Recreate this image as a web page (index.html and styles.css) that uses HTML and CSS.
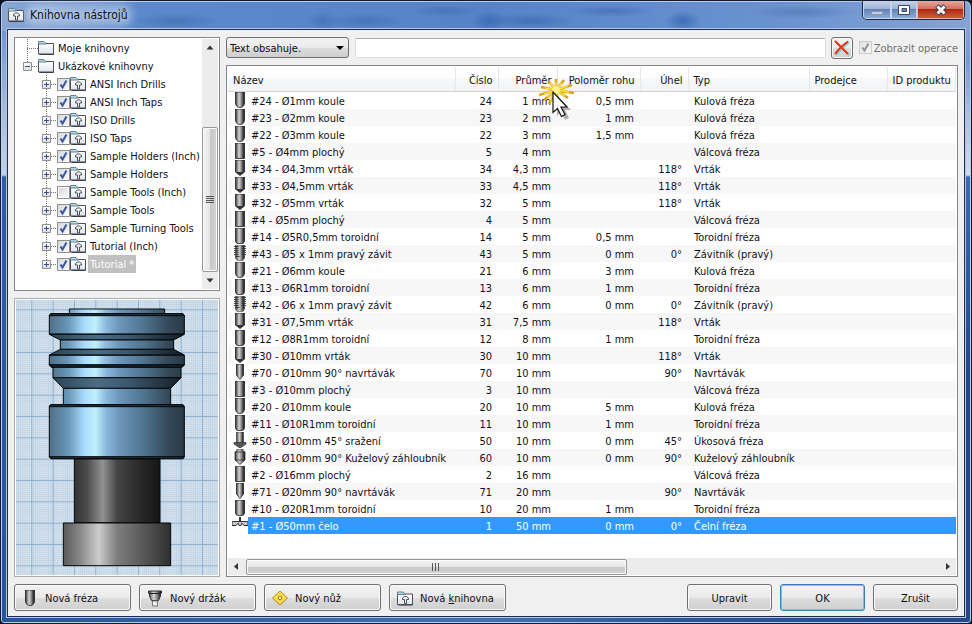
FILE: index.html
```html
<!DOCTYPE html>
<html lang="cs">
<head>
    <meta charset="UTF-8">
    <meta name="viewport" content="width=device-width, initial-scale=1.0">
    <title>Knihovna nástrojů</title>
    <link rel="stylesheet" href="styles.css">
</head>
<body>
    <!-- icon sprites -->
    <svg class="sprites" aria-hidden="true">
        <defs>
            <linearGradient id="steel" x1="0" x2="1" y1="0" y2="0">
                <stop offset="0" stop-color="#2a2a2a"/>
                <stop offset=".2" stop-color="#8a8a8a"/>
                <stop offset=".4" stop-color="#d4d4d4"/>
                <stop offset=".65" stop-color="#8c8c8c"/>
                <stop offset=".85" stop-color="#3c3c3c"/>
                <stop offset="1" stop-color="#161616"/>
            </linearGradient>
            <linearGradient id="paper" x1="0" x2="0" y1="0" y2="1">
                <stop offset="0" stop-color="#ffffff"/>
                <stop offset="1" stop-color="#dfe3ea"/>
            </linearGradient>
            <linearGradient id="box" x1="0" x2="0" y1="0" y2="1">
                <stop offset="0" stop-color="#ffffff"/>
                <stop offset="1" stop-color="#dcdcdc"/>
            </linearGradient>
        </defs>
        <symbol id="ball" viewBox="0 0 16 17"><path d="M3.500 0V11Q4 15.500 8 15.500T12.500 11V0Z" fill="url(#steel)" stroke="#222" stroke-width=".8"/></symbol>
        <symbol id="flat" viewBox="0 0 16 17"><path d="M3.500 0V15.500H12.500V0Z" fill="url(#steel)" stroke="#222" stroke-width=".8"/></symbol>
        <symbol id="torus" viewBox="0 0 16 17"><path d="M3.500 0V13Q4 15.500 6 15.500H10Q12 15.500 12.500 13V0Z" fill="url(#steel)" stroke="#222" stroke-width=".8"/></symbol>
        <symbol id="drill" viewBox="0 0 16 17"><path d="M3.500 0V12L8 15.500L12.500 12V0Z" fill="url(#steel)" stroke="#222" stroke-width=".8"/><path d="M3.500 12H12.500L8 15.500Z" fill="#333"/></symbol>
        <symbol id="spot" viewBox="0 0 16 17"><path d="M4.500 0V11L8 15.500L11.500 11V0Z" fill="url(#steel)" stroke="#222" stroke-width=".8"/></symbol>
        <symbol id="tap" viewBox="0 0 16 17"><path d="M3.500 0V13L5 15.500H11L12.500 13V0Z" fill="url(#steel)" stroke="#555" stroke-width=".6"/><path d="M2 1.500H14M2 3.500H14M2 5.500H14M2 7.500H14M2 9.500H14M3 11.500H13" stroke="#333" stroke-width=".9" stroke-dasharray="4.500 3 4.500"/></symbol>
        <symbol id="chamfer" viewBox="0 0 16 17"><path d="M4.500 0H11.500V10.500H4.500Z" fill="url(#steel)" stroke="#333" stroke-width=".6"/><path d="M2 10.500H14V12L9 15.500H7L2 12Z" fill="#555" stroke="#222" stroke-width=".6"/></symbol>
        <symbol id="sink" viewBox="0 0 16 17"><path d="M5 0H11V2L13 3V11L8 15.500L3 11V3L5 2Z" fill="url(#steel)" stroke="#333" stroke-width=".8"/><path d="M3 3H13M3 11H13" stroke="#333" stroke-width=".8"/></symbol>
        <symbol id="face" viewBox="0 0 16 17"><path d="M7 0H9V5H7Z" fill="#333"/><path d="M0 4.500H16M0 5V8.500H4L5.500 6.500H6.500L7 8.500H9L9.500 6.500H10.500L12 8.500H16V5" fill="#c8c8c8" stroke="#333"/></symbol>
        <symbol id="folder" viewBox="0 0 16 16"><path d="M1.500 5.500H15.500V14.500H1.500Z" fill="none" stroke="#2c2f38"/><path d="M.5 3.500H15.500V14H.5Z" fill="url(#paper)" stroke="#4b4f59"/><path d="M.5 1.500H6L8.500 4H.5Z" fill="#b4dcea" stroke="#64808c"/></symbol>
        <symbol id="lib" viewBox="0 0 16 16"><use href="#folder"/><path d="M5.500 9V7.500L7.500 6H9.500L11.500 7.500V9H9.500V13H7.500V9Z" fill="#f4f4f4" stroke="#4b4f59"/></symbol>
        <symbol id="leaf" viewBox="0 0 20 18"><path d="M9.500 0V18M9 9.500H20" stroke="#777" stroke-dasharray="1 1"/></symbol>
        <symbol id="minus" viewBox="0 0 20 18"><path d="M9.500 0V6M14 9.500H20" stroke="#777" stroke-dasharray="1 1"/><path d="M5.500 5.500H13.500V13.500H5.500Z" fill="url(#box)" stroke="#8f8f8f"/><path d="M7 9.500H12" stroke="#2f4f9f"/></symbol>
        <symbol id="plus" viewBox="0 0 20 18"><path d="M9.500 0V18M14 9.500H20" stroke="#777" stroke-dasharray="1 1"/><path d="M5.500 5.500H13.500V13.500H5.500Z" fill="url(#box)" stroke="#8f8f8f"/><path d="M7 9.500H12M9.500 7V12" stroke="#2f4f9f"/></symbol>
        <symbol id="last" viewBox="0 0 20 18"><path d="M9.500 0V6M14 9.500H20" stroke="#777" stroke-dasharray="1 1"/><path d="M5.500 5.500H13.500V13.500H5.500Z" fill="url(#box)" stroke="#8f8f8f"/><path d="M7 9.500H12M9.500 7V12" stroke="#2f4f9f"/></symbol>
    </svg>

    <div class="window">
        <header class="titlebar">
            <svg class="icon"><use href="#lib"/></svg>
            <h1><span>Knihovna nástrojů</span></h1>
            <div class="controls">
                <button class="min" aria-label="Minimalizovat"><svg viewBox="0 0 14 12"><path d="M1.500 7.500H12.500V10.500H1.500Z" fill="#c3d0e3" stroke="#8597b5"/></svg></button>
                <button class="max" aria-label="Maximalizovat"><svg viewBox="0 0 14 12"><path d="M1.500 1.500H12.500V10.500H1.500Z" fill="#fff" stroke="#3b4660"/><path d="M5 4.500H9.500V7.500H5Z" fill="#6f86b0" stroke="#3b4660"/></svg></button>
                <button class="close" aria-label="Zavřít"><svg viewBox="0 0 14 12"><path d="M3 2L11 10M11 2L3 10" stroke="#3d3f55" stroke-width="5"/><path d="M3.500 2.500L10.500 9.500M10.500 2.500L3.500 9.500" stroke="#f4f4f4" stroke-width="3"/></svg></button>
            </div>
        </header>

        <main class="client">
            <div class="panes">
                <aside class="sidebar">
                    <div class="tree">
                        <ul>
                            <li><svg class="branch"><use href="#leaf"/></svg><svg class="icon"><use href="#folder"/></svg><span>Moje knihovny</span></li>
                            <li><svg class="branch"><use href="#minus"/></svg><svg class="icon"><use href="#folder"/></svg><span>Ukázkové knihovny</span></li>
                            <li class="sub"><svg class="branch"><use href="#plus"/></svg><input type="checkbox" id="l1" checked><svg class="icon"><use href="#lib"/></svg><label for="l1">ANSI Inch Drills</label></li>
                            <li class="sub"><svg class="branch"><use href="#plus"/></svg><input type="checkbox" id="l2" checked><svg class="icon"><use href="#lib"/></svg><label for="l2">ANSI Inch Taps</label></li>
                            <li class="sub"><svg class="branch"><use href="#plus"/></svg><input type="checkbox" id="l3" checked><svg class="icon"><use href="#lib"/></svg><label for="l3">ISO Drills</label></li>
                            <li class="sub"><svg class="branch"><use href="#plus"/></svg><input type="checkbox" id="l4" checked><svg class="icon"><use href="#lib"/></svg><label for="l4">ISO Taps</label></li>
                            <li class="sub"><svg class="branch"><use href="#plus"/></svg><input type="checkbox" id="l5" checked><svg class="icon"><use href="#lib"/></svg><label for="l5">Sample Holders (Inch)</label></li>
                            <li class="sub"><svg class="branch"><use href="#plus"/></svg><input type="checkbox" id="l6" checked><svg class="icon"><use href="#lib"/></svg><label for="l6">Sample Holders</label></li>
                            <li class="sub"><svg class="branch"><use href="#plus"/></svg><input type="checkbox" id="l7"><svg class="icon"><use href="#lib"/></svg><label for="l7">Sample Tools (Inch)</label></li>
                            <li class="sub"><svg class="branch"><use href="#plus"/></svg><input type="checkbox" id="l8" checked><svg class="icon"><use href="#lib"/></svg><label for="l8">Sample Tools</label></li>
                            <li class="sub"><svg class="branch"><use href="#plus"/></svg><input type="checkbox" id="l9" checked><svg class="icon"><use href="#lib"/></svg><label for="l9">Sample Turning Tools</label></li>
                            <li class="sub"><svg class="branch"><use href="#plus"/></svg><input type="checkbox" id="l10" checked><svg class="icon"><use href="#lib"/></svg><label for="l10">Tutorial (Inch)</label></li>
                            <li class="sub"><svg class="branch"><use href="#last"/></svg><input type="checkbox" id="l11" checked><svg class="icon"><use href="#lib"/></svg><label class="current" for="l11">Tutorial *</label></li>
                        </ul>
                        <div class="scroll vertical">
                            <svg class="arrow" viewBox="0 0 16 16"><path d="M4.500 10H11.500L8 6Z"/></svg>
                            <div class="track">
                                <div class="thumb"><svg viewBox="0 0 8 8"><path d="M0 .5H8M0 2.500H8M0 4.500H8M0 6.500H8"/></svg></div>
                            </div>
                            <svg class="arrow" viewBox="0 0 16 16"><path d="M4.500 6H11.500L8 10Z"/></svg>
                        </div>
                    </div>

                    <div class="preview">
                        <svg viewBox="0 0 606 825" preserveAspectRatio="xMidYMid slice">
                            <defs>
                                <pattern id="fine" width="6.400" height="6.400" patternUnits="userSpaceOnUse">
                                    <path d="M0 1.500H6.400M1.500 0V6.400" stroke="#bfd2e4" stroke-width="2.400"/>
                                </pattern>
                                <pattern id="grid" x="46" y="28" width="64" height="64" patternUnits="userSpaceOnUse">
                                    <path d="M0 1.500H64M1.500 0V64" stroke="#8fb1d2" stroke-width="3"/>
                                </pattern>
                                <linearGradient id="blue" gradientUnits="userSpaceOnUse" x1="100" x2="505" y1="0" y2="0">
                                    <stop offset="0" stop-color="#4f7088"/>
                                    <stop offset=".14" stop-color="#6997ba"/>
                                    <stop offset=".26" stop-color="#aadbfd"/>
                                    <stop offset=".34" stop-color="#bff0fb"/>
                                    <stop offset=".42" stop-color="#8cbadd"/>
                                    <stop offset=".52" stop-color="#6b95bb"/>
                                    <stop offset=".7" stop-color="#507490"/>
                                    <stop offset=".87" stop-color="#364a5b"/>
                                    <stop offset="1" stop-color="#293a47"/>
                                </linearGradient>
                                <linearGradient id="shade" gradientUnits="userSpaceOnUse" x1="100" x2="505" y1="0" y2="0">
                                    <stop offset="0" stop-color="#2c4250"/>
                                    <stop offset=".35" stop-color="#4b6c84"/>
                                    <stop offset=".6" stop-color="#3c566b"/>
                                    <stop offset="1" stop-color="#111a22"/>
                                </linearGradient>
                                <linearGradient id="dark">
                                    <stop offset="0" stop-color="#333333"/>
                                    <stop offset=".15" stop-color="#4c4c4c"/>
                                    <stop offset=".33" stop-color="#929292"/>
                                    <stop offset=".5" stop-color="#444444"/>
                                    <stop offset=".8" stop-color="#262626"/>
                                    <stop offset="1" stop-color="#151515"/>
                                </linearGradient>
                                <linearGradient id="gray">
                                    <stop offset="0" stop-color="#5a5a5a"/>
                                    <stop offset=".15" stop-color="#868686"/>
                                    <stop offset=".33" stop-color="#cccccc"/>
                                    <stop offset=".5" stop-color="#7e7e7e"/>
                                    <stop offset=".8" stop-color="#4f4f4f"/>
                                    <stop offset="1" stop-color="#2f2f2f"/>
                                </linearGradient>
                            </defs>
                            <rect width="606" height="825" fill="#dde8f0"/>
                            <rect width="606" height="825" fill="url(#fine)"/>
                            <rect width="606" height="825" fill="url(#grid)"/>
                            <g stroke="#05080b" stroke-width="3">
                                <path d="M160 27H446V41H160Z" fill="url(#blue)"/>
                                <path d="M104 41H501L505 47V102H100V47Z" fill="url(#blue)"/>
                                <path d="M104 41H501L505 47H100Z" fill="#22323d"/>
                                <path d="M100 103H505L473 120H133Z" fill="url(#shade)"/>
                                <path d="M133 120H473V148H133Z" fill="url(#blue)"/>
                                <path d="M133 148H473L505 165H100Z" fill="url(#shade)"/>
                                <path d="M100 166H505V195L498 202H107L100 195Z" fill="url(#blue)"/>
                                <path d="M100 194H505L498 202H107Z" fill="#17222b"/>
                                <path d="M111 202H495V233H111Z" fill="url(#blue)"/>
                                <path d="M111 233H495L464 265H142Z" fill="url(#shade)"/>
                                <path d="M142 265H464V314H142Z" fill="url(#blue)"/>
                                <path d="M104 314H501L505 320V470L501 476H104L100 470V320Z" fill="url(#blue)"/>
                                <path d="M104 314H501L505 320H100Z" fill="#22323d"/>
                                <path d="M100 470H505L501 476H104Z" fill="#22323d"/>
                                <path d="M175 477H432V668H175Z" fill="url(#dark)"/>
                                <path d="M142 669H464V797H142Z" fill="url(#gray)"/>
                            </g>
                        </svg>
                    </div>
                </aside>

                <section class="content">
                    <form class="filter">
                        <select aria-label="Filtr">
                            <option>Text obsahuje.</option>
                        </select>
                        <input type="text" aria-label="Hledaný text">
                        <button type="button" class="clear" aria-label="Vymazat"><svg viewBox="0 0 16 16"><path d="M2 2L15 15M15 2L2 15" stroke="#7fd6dc" stroke-width="2"/><path d="M1 1Q7 7 14 14M14 1.500Q6 7 1 14" fill="none" stroke="#e8350f" stroke-width="2"/></svg></button>
                        <input type="checkbox" id="ops" checked disabled>
                        <label for="ops">Zobrazit operace</label>
                    </form>

                    <div class="list">
                        <table>
                            <colgroup>
                                <col class="c-name"><col class="c-no"><col class="c-dia"><col class="c-rad"><col class="c-ang"><col class="c-type"><col class="c-vendor"><col>
                            </colgroup>
                            <thead>
                                <tr><th>Název</th><th class="n">Číslo</th><th class="n">Průměr</th><th class="n">Poloměr rohu</th><th class="n">Úhel</th><th>Typ</th><th>Prodejce</th><th>ID produktu</th></tr>
                            </thead>
                            <tbody>
                                <tr><td><svg><use href="#ball"/></svg>#24 - Ø1mm koule</td><td>24</td><td>1 mm</td><td>0,5 mm</td><td></td><td>Kulová fréza</td><td></td><td></td></tr>
                                <tr><td><svg><use href="#ball"/></svg>#23 - Ø2mm koule</td><td>23</td><td>2 mm</td><td>1 mm</td><td></td><td>Kulová fréza</td><td></td><td></td></tr>
                                <tr><td><svg><use href="#ball"/></svg>#22 - Ø3mm koule</td><td>22</td><td>3 mm</td><td>1,5 mm</td><td></td><td>Kulová fréza</td><td></td><td></td></tr>
                                <tr><td><svg><use href="#flat"/></svg>#5 - Ø4mm plochý</td><td>5</td><td>4 mm</td><td></td><td></td><td>Válcová fréza</td><td></td><td></td></tr>
                                <tr><td><svg><use href="#drill"/></svg>#34 - Ø4,3mm vrták</td><td>34</td><td>4,3 mm</td><td></td><td>118°</td><td>Vrták</td><td></td><td></td></tr>
                                <tr><td><svg><use href="#drill"/></svg>#33 - Ø4,5mm vrták</td><td>33</td><td>4,5 mm</td><td></td><td>118°</td><td>Vrták</td><td></td><td></td></tr>
                                <tr><td><svg><use href="#drill"/></svg>#32 - Ø5mm vrták</td><td>32</td><td>5 mm</td><td></td><td>118°</td><td>Vrták</td><td></td><td></td></tr>
                                <tr><td><svg><use href="#flat"/></svg>#4 - Ø5mm plochý</td><td>4</td><td>5 mm</td><td></td><td></td><td>Válcová fréza</td><td></td><td></td></tr>
                                <tr><td><svg><use href="#torus"/></svg>#14 - Ø5R0,5mm toroidní</td><td>14</td><td>5 mm</td><td>0,5 mm</td><td></td><td>Toroidní fréza</td><td></td><td></td></tr>
                                <tr><td><svg><use href="#tap"/></svg>#43 - Ø5 x 1mm pravý závit</td><td>43</td><td>5 mm</td><td>0 mm</td><td>0°</td><td>Závitník (pravý)</td><td></td><td></td></tr>
                                <tr><td><svg><use href="#ball"/></svg>#21 - Ø6mm koule</td><td>21</td><td>6 mm</td><td>3 mm</td><td></td><td>Kulová fréza</td><td></td><td></td></tr>
                                <tr><td><svg><use href="#torus"/></svg>#13 - Ø6R1mm toroidní</td><td>13</td><td>6 mm</td><td>1 mm</td><td></td><td>Toroidní fréza</td><td></td><td></td></tr>
                                <tr><td><svg><use href="#tap"/></svg>#42 - Ø6 x 1mm pravý závit</td><td>42</td><td>6 mm</td><td>0 mm</td><td>0°</td><td>Závitník (pravý)</td><td></td><td></td></tr>
                                <tr><td><svg><use href="#drill"/></svg>#31 - Ø7,5mm vrták</td><td>31</td><td>7,5 mm</td><td></td><td>118°</td><td>Vrták</td><td></td><td></td></tr>
                                <tr><td><svg><use href="#torus"/></svg>#12 - Ø8R1mm toroidní</td><td>12</td><td>8 mm</td><td>1 mm</td><td></td><td>Toroidní fréza</td><td></td><td></td></tr>
                                <tr><td><svg><use href="#drill"/></svg>#30 - Ø10mm vrták</td><td>30</td><td>10 mm</td><td></td><td>118°</td><td>Vrták</td><td></td><td></td></tr>
                                <tr><td><svg><use href="#spot"/></svg>#70 - Ø10mm 90° navrtávák</td><td>70</td><td>10 mm</td><td></td><td>90°</td><td>Navrtávák</td><td></td><td></td></tr>
                                <tr><td><svg><use href="#flat"/></svg>#3 - Ø10mm plochý</td><td>3</td><td>10 mm</td><td></td><td></td><td>Válcová fréza</td><td></td><td></td></tr>
                                <tr><td><svg><use href="#ball"/></svg>#20 - Ø10mm koule</td><td>20</td><td>10 mm</td><td>5 mm</td><td></td><td>Kulová fréza</td><td></td><td></td></tr>
                                <tr><td><svg><use href="#torus"/></svg>#11 - Ø10R1mm toroidní</td><td>11</td><td>10 mm</td><td>1 mm</td><td></td><td>Toroidní fréza</td><td></td><td></td></tr>
                                <tr><td><svg><use href="#chamfer"/></svg>#50 - Ø10mm 45° sražení</td><td>50</td><td>10 mm</td><td>0 mm</td><td>45°</td><td>Úkosová fréza</td><td></td><td></td></tr>
                                <tr><td><svg><use href="#sink"/></svg>#60 - Ø10mm 90° Kuželový záhloubník</td><td>60</td><td>10 mm</td><td>0 mm</td><td>90°</td><td>Kuželový záhloubník</td><td></td><td></td></tr>
                                <tr><td><svg><use href="#flat"/></svg>#2 - Ø16mm plochý</td><td>2</td><td>16 mm</td><td></td><td></td><td>Válcová fréza</td><td></td><td></td></tr>
                                <tr><td><svg><use href="#spot"/></svg>#71 - Ø20mm 90° navrtávák</td><td>71</td><td>20 mm</td><td></td><td>90°</td><td>Navrtávák</td><td></td><td></td></tr>
                                <tr><td><svg><use href="#torus"/></svg>#10 - Ø20R1mm toroidní</td><td>10</td><td>20 mm</td><td>1 mm</td><td></td><td>Toroidní fréza</td><td></td><td></td></tr>
                                <tr class="selected"><td><svg><use href="#face"/></svg>#1 - Ø50mm čelo</td><td>1</td><td>50 mm</td><td>0 mm</td><td>0°</td><td>Čelní fréza</td><td></td><td></td></tr>
                            </tbody>
                        </table>
                        <div class="scroll horizontal">
                            <svg class="arrow" viewBox="0 0 16 16"><path d="M10 4.500V11.500L6 8Z"/></svg>
                            <div class="track">
                                <div class="thumb"><svg viewBox="0 0 8 8"><path d="M.5 0V8M3.500 0V8M6.500 0V8"/></svg></div>
                            </div>
                            <svg class="arrow" viewBox="0 0 16 16"><path d="M6 4.500V11.500L10 8Z"/></svg>
                        </div>

                        <!-- mouse pointer with click burst -->
                        <svg class="pointer" viewBox="0 0 44 46">
                            <path d="M17 12L17 1M17 12L25 2M17 12L33 7M17 12L35 15M17 12L29 20M17 12L19 22M17 12L10 26M17 12L5 22M17 12L0 17M17 12L2 9M17 12L9 3" stroke="#dda21a" stroke-width="2.600"/>
                            <path d="M17 12L17 4M17 12L23 5M17 12L29 8M17 12L30 14M17 12L26 18M17 12L18 19M17 12L11 23M17 12L8 19M17 12L5 16M17 12L6 10M17 12L11 5" stroke="#ffe04a" stroke-width="1.400"/>
                            <circle cx="17" cy="12" r="4" fill="#fff08a"/>
                            <path d="M18 18V38L22 34L26 42L30 40L26 32H32Z" fill="#000" opacity=".3"/>
                            <path d="M14 14V34.500L18.500 30.500L22.500 38.500L26 36.500L22 29H28Z" fill="#fff" stroke="#111" stroke-width="1.200"/>
                        </svg>
                    </div>
                </section>
            </div>

            <footer class="buttons">
                <button class="tool"><svg><use href="#ball"/></svg>Nová fréza</button>
                <button class="tool"><svg viewBox="0 0 16 17"><path d="M1.500 1H14.500V3L13.500 4V6L11.500 10.500H4.500L2.500 6V4L1.500 3Z" fill="url(#steel)" stroke="#333"/><path d="M2 3.500H14" stroke="#222"/><path d="M5.500 11H10.500V16H5.500Z" fill="#eee" stroke="#777"/></svg>Nový držák</button>
                <button class="tool"><svg viewBox="0 0 16 17"><path d="M8 1L15.500 8L8 15L.5 8Z" fill="#fbdc4e" stroke="#b98716"/><circle cx="8" cy="8" r="1.800" fill="#fff8d0" stroke="#a07818"/></svg>Nový nůž</button>
                <button class="tool"><svg><use href="#lib"/></svg>Nová <u>k</u>nihovna</button>
                <span class="spacer"></span>
                <button>Upravit</button>
                <button class="default">OK</button>
                <button>Zrušit</button>
            </footer>
        </main>
    </div>
</body>
</html>
```
FILE: styles.css
```css
* {
    box-sizing: border-box;
}

body {
    margin: 0;
    background: #0c1424;
    font-family: "DejaVu Sans Condensed", "DejaVu Sans", sans-serif;
    font-size: 11px;
    line-height: 17px;
    color: #101018;
}

button, input, select {
    font: inherit;
    color: inherit;
    margin: 0;
}

.sprites {
    position: absolute;
    width: 0;
    height: 0;
}

/* window frame */
.window {
    display: flex;
    flex-direction: column;
    min-height: 100vh;
    padding: 0 6px 6px;
    border: 1px solid #101a30;
    border-radius: 7px 7px 4px 4px;
    box-shadow: inset 0 0 0 1px #b9cdea;
    background:
        radial-gradient(closest-side, #3e6cb4, #3e6cb400) 470px 10px / 36px 20px no-repeat,
        radial-gradient(closest-side, #3e6cb4, #3e6cb400) 664px 10px / 36px 20px no-repeat,
        radial-gradient(closest-side, #4a74b8, #4a74b800) 305px 10px / 34px 20px no-repeat,
        radial-gradient(closest-side, #4a74b8, #4a74b800) 130px 12px / 90px 16px no-repeat,
        radial-gradient(closest-side, #4a74b8, #4a74b800) 325px 12px / 80px 16px no-repeat,
        radial-gradient(closest-side, #4470b6, #4470b600) 485px 12px / 90px 16px no-repeat,
        radial-gradient(closest-side, #4a74b8, #4a74b800) 410px 4px / 70px 12px no-repeat,
        radial-gradient(closest-side, #4a74b8, #4a74b800) 565px 4px / 90px 12px no-repeat,
        radial-gradient(closest-side, #5a80bc, #5a80bc00) 745px 4px / 110px 14px no-repeat,
        linear-gradient(90deg, #8aa6d4, #5c88cc 14%, #5683c8 50%, #6a92d0 80%, #86a3d2) top / 100% 30px no-repeat,
        linear-gradient(#5c88cc, #86a5d6 60px, #aebfdd 120px, #c3cfe4 174px, #2f5ca4 176px, #29539a) left / 8px 100% no-repeat,
        linear-gradient(#8fa9d4, #7899d0 60px, #a9bddf 110px, #d3dbea 174px, #3c6ab6 176px, #24488a 60%, #24488a) right / 8px 100% no-repeat,
        linear-gradient(90deg, #29539a, #4570b4 50%, #2c569c 70%, #24488a) bottom / 100% 8px no-repeat;
}

.titlebar {
    display: flex;
    align-items: center;
    gap: 6px;
    height: 28px;
    padding-left: 1px;
}

.titlebar h1 {
    flex: 1;
    margin: 0;
    font-size: 12px;
    font-weight: normal;
}

.titlebar h1 span {
    border-radius: 9px;
    background: rgba(255, 255, 255, .25);
    box-shadow: 0 0 9px 5px rgba(255, 255, 255, .3);
    text-shadow: 0 0 6px #fff;
}

.icon {
    flex: none;
    width: 16px;
    height: 16px;
}

.controls {
    display: flex;
    align-self: flex-start;
    border: 1px solid #1b2a48;
    border-top: 0;
    border-radius: 0 0 5px 5px;
    overflow: hidden;
}

.controls button {
    display: flex;
    align-items: center;
    justify-content: center;
    width: 28px;
    height: 18px;
    padding: 0;
    border: 1px solid #c8d6ec;
    border-top: 0;
    background: linear-gradient(#c6d3e8, #9db3d6 48%, #6482b6 50%, #8fabd8);
}

.controls .max {
    width: 26px;
}

.controls .close {
    width: 47px;
    border-color: #e8b0a4;
    background: linear-gradient(#e5a99c, #cf6f5c 48%, #ae2712 50%, #cc6038);
}

.controls svg {
    width: 14px;
    height: 12px;
}

.client {
    flex: 1;
    display: flex;
    flex-direction: column;
    gap: 7px;
    padding: 7px 6px 5px;
    border: 1px solid #1d2f50;
    outline: 1px solid #b4c6e2;
    background: #f0f0f0;
}

.panes {
    flex: 1;
    display: flex;
    gap: 6px;
}

.sidebar {
    display: flex;
    flex-direction: column;
    gap: 7px;
    width: 206px;
}

/* library tree */
.tree {
    display: flex;
    padding: 1px;
    border: 1px solid #828790;
    background: #fff;
}

.tree ul {
    flex: 1;
    margin: 0;
    padding: 0 0 16px 2px;
    list-style: none;
}

.tree li {
    display: flex;
    align-items: center;
    height: 18px;
    white-space: nowrap;
}

.tree li.sub {
    padding-left: 19px;
}

.tree span,
.tree label {
    margin-left: 2px;
    padding: 2px 2px 0;
    line-height: 16px;
}

.tree .current {
    background: #c0c0c0;
    color: #fff;
}

.branch {
    flex: none;
    width: 20px;
    height: 18px;
}

input[type="checkbox"] {
    appearance: none;
    flex: none;
    width: 13px;
    height: 13px;
    border: 1px solid #8e8f8f;
    background: linear-gradient(135deg, #d6d8dc, #fbfbfb) content-box #f4f4f4;
    padding: 1px;
}

input[type="checkbox"]:checked {
    background: url("data:image/svg+xml,%3Csvg xmlns='http://www.w3.org/2000/svg' viewBox='0 0 11 11'%3E%3Cpath d='M2.500 5.500L4.500 8.500L8.500 1.500' fill='none' stroke='%233b55a0' stroke-width='2'/%3E%3C/svg%3E") center / 11px 11px no-repeat border-box, linear-gradient(135deg, #d6d8dc, #fbfbfb);
}

input[type="checkbox"]:disabled {
    border-color: #b4b4b4;
    filter: grayscale(1) opacity(.6);
}

/* scroll bars */
.scroll {
    display: flex;
    background: #ececec;
}

.scroll .arrow {
    flex: none;
    width: 16px;
    height: 17px;
    fill: #333;
}

.scroll .track {
    flex: 1;
    display: flex;
}

.scroll .thumb {
    display: flex;
    align-items: center;
    justify-content: center;
    border: 1px solid #979797;
    border-radius: 2px;
    box-shadow: inset 0 0 0 1px #fafafa;
}

.thumb svg {
    width: 8px;
    height: 8px;
    stroke: #555;
}

.vertical {
    flex-direction: column;
    width: 16px;
}

.vertical .track {
    flex-direction: column;
    justify-content: flex-end;
}

.vertical .thumb {
    height: 67%;
    background: linear-gradient(90deg, #f4f4f4, #e4e4e4 50%, #c8c8c8 52%, #d4d4d4);
}

.horizontal {
    height: 17px;
    margin-top: auto;
    align-items: center;
}

.horizontal .track {
    padding: 0 2px;
}

.horizontal .thumb {
    width: 55%;
    height: 16px;
    background: linear-gradient(#f4f4f4, #e4e4e4 50%, #c8c8c8 52%, #d4d4d4);
}

/* tool preview */
.preview {
    flex: 1;
    display: flex;
    padding: 1px;
    border: 1px solid #a9adb3;
    background: #fff;
}

.preview svg {
    width: 100%;
}

/* filter row */
.content {
    flex: 1;
    display: flex;
    flex-direction: column;
    gap: 7px;
    min-width: 0;
}

.filter {
    display: flex;
    align-items: center;
    height: 21px;
}

.filter select {
    appearance: none;
    width: 123px;
    height: 21px;
    padding: 2px 3px 0;
    border: 1px solid #707070;
    border-radius: 3px;
    background:
        url("data:image/svg+xml,%3Csvg xmlns='http://www.w3.org/2000/svg' viewBox='0 0 8 4'%3E%3Cpath d='M0 0H8L4 4Z'/%3E%3C/svg%3E") right 4px center / 8px 4px no-repeat,
        linear-gradient(#f2f2f2, #ebebeb 50%, #dcdcdc 52%, #cfcfcf);
}

.filter input[type="text"] {
    flex: 1;
    min-width: 0;
    height: 20px;
    margin: 0 5px 0 6px;
    border: 1px solid #dcdfe6;
    border-top-color: #abadb3;
    border-radius: 2px;
    background: #fff;
}

.filter .clear {
    width: 22px;
    height: 22px;
    margin-right: 6px;
    padding: 2px;
}

.filter .clear svg {
    width: 16px;
    height: 16px;
}

.filter label {
    padding: 1px 0 0 2px;
    color: #707070;
}

/* tool list */
.list {
    position: relative;
    flex: 1;
    display: flex;
    flex-direction: column;
    padding: 1px;
    border: 1px solid #828790;
    background: #fff;
}

table {
    width: 100%;
    table-layout: fixed;
    border-collapse: collapse;
}

.c-name { width: 227px; }
.c-no { width: 43px; }
.c-dia { width: 59px; }
.c-rad { width: 83px; }
.c-ang { width: 48px; }
.c-type { width: 121px; }
.c-vendor { width: 78px; }

th {
    height: 24px;
    padding: 3px 5px 0;
    border-right: 1px solid #e6e7ea;
    border-bottom: 1px solid #d5d5d5;
    background: linear-gradient(#fff, #fff 45%, #f7f8fa 47%, #f2f3f5);
    font-weight: normal;
    text-align: left;
    white-space: nowrap;
}

th.n {
    text-align: right;
}

td {
    height: 17px;
    padding: 2px 6px 0;
    line-height: 15px;
    white-space: nowrap;
}

td:first-child {
    padding: 2px 0 0 4px;
}

td:nth-child(n+2):nth-child(-n+5) {
    text-align: right;
}

td svg {
    width: 16px;
    height: 17px;
    margin: -2px 3px 0 0;
    vertical-align: top;
    background: #fff;
}

tbody tr:nth-child(even) {
    background: #f7f7f7;
}

tbody .selected td {
    background: #3399ff;
    color: #fff;
}

tbody .selected td:first-child {
    background: linear-gradient(90deg, #fff 20px, #3399ff 20px);
}

.pointer {
    position: absolute;
    left: 312px;
    top: 12px;
    width: 44px;
    height: 46px;
}

/* bottom buttons */
.buttons {
    display: flex;
    gap: 8px;
}

.buttons button,
.filter .clear {
    border: 1px solid #707070;
    border-radius: 3px;
    box-shadow: inset 0 0 0 1px #fafafa;
    background: linear-gradient(#f2f2f2, #ebebeb 50%, #dddddd 52%, #cfcfcf);
}

.buttons button {
    width: 85px;
    height: 27px;
    padding: 1px 0 0;
}

.buttons .tool {
    display: flex;
    align-items: center;
    width: 117px;
    padding-left: 7px;
    white-space: pre;
}

.buttons .tool svg {
    width: 16px;
    height: 17px;
    margin-right: 7px;
}

.buttons .default {
    border-color: #3c7fb1;
    box-shadow: inset 0 0 0 1px #45d8fb;
}

.spacer {
    flex: 1;
}
```
